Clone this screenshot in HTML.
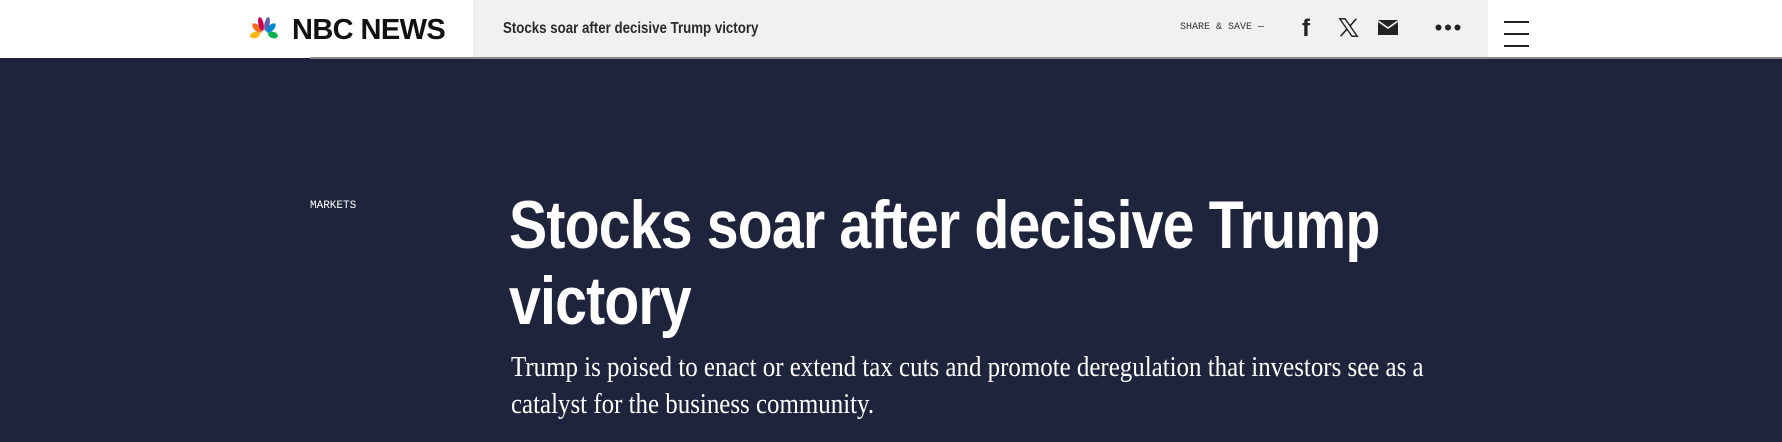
<!DOCTYPE html>
<html><head><style>
*{margin:0;padding:0;box-sizing:border-box}
body{width:1782px;height:442px;overflow:hidden;background:#1e243c;position:relative;font-family:"Liberation Sans",sans-serif}
.hdr{position:absolute;left:0;top:0;width:1782px;height:58px;background:#fff}
.grey{position:absolute;left:473px;top:0;width:1015px;height:58px;background:#f1f1f1}
.line{position:absolute;left:310px;top:57px;width:1472px;height:2px;background:#888}
.abs{position:absolute;white-space:nowrap}
</style></head><body>
<div class="hdr"></div>
<div class="grey"></div>
<div class="line"></div>
<svg class="abs" style="left:250px;top:16px" width="28" height="24" viewBox="0 0 28 24">
<ellipse cx="5" cy="19" rx="5" ry="3.2" fill="#fcb711" transform="rotate(-15 5 19)"/>
<ellipse cx="7" cy="12" rx="3" ry="6" fill="#f37021" transform="rotate(-45 7 12)"/>
<ellipse cx="11" cy="8" rx="2.6" ry="7" fill="#cc004c" transform="rotate(-12 11 8)"/>
<ellipse cx="17" cy="8" rx="2.6" ry="7" fill="#6460aa" transform="rotate(12 17 8)"/>
<ellipse cx="21" cy="12" rx="3" ry="6" fill="#0089d0" transform="rotate(45 21 12)"/>
<ellipse cx="23" cy="19" rx="5" ry="3.2" fill="#0db14b" transform="rotate(15 23 19)"/>
</svg>
<div class="abs" style="left:292px;top:14px;font-size:29px;font-weight:bold;color:#111;letter-spacing:-0.6px">NBC NEWS</div>
<div class="abs" style="left:503px;top:20px;font-size:16px;font-weight:bold;color:#2a2a2a;transform:scaleX(0.83);transform-origin:left">Stocks soar after decisive Trump victory</div>
<div class="abs" style="left:1180px;top:22px;font-family:'Liberation Mono',monospace;font-size:10px;color:#333">SHARE &amp; SAVE —</div>
<div class="abs" style="left:1302px;top:15px;font-size:24px;font-weight:bold;color:#222">f</div>
<svg class="abs" style="left:1338px;top:17px" width="21" height="21" viewBox="0 0 24 24"><path d="M2 2h6l14 20h-6z" fill="none" stroke="#222" stroke-width="1.6"/><path d="M21 2L13.5 10.5M3 22l7.5-8.5" stroke="#222" stroke-width="1.8"/></svg>
<svg class="abs" style="left:1378px;top:20px" width="20" height="15" viewBox="0 0 20 15"><rect width="20" height="15" fill="#222"/><path d="M0 1l10 7 10-7" fill="none" stroke="#f1f1f1" stroke-width="1.6"/></svg>
<svg class="abs" style="left:1435px;top:24px" width="26" height="7"><circle cx="3.5" cy="3.5" r="3" fill="#222"/><circle cx="13" cy="3.5" r="3" fill="#222"/><circle cx="22.5" cy="3.5" r="3" fill="#222"/></svg>
<div class="abs" style="left:1504px;top:21px;width:25px;height:2px;background:#222"></div>
<div class="abs" style="left:1504px;top:33px;width:25px;height:2px;background:#222"></div>
<div class="abs" style="left:1504px;top:45px;width:25px;height:2px;background:#222"></div>
<div class="abs" style="left:310px;top:200px;font-family:'Liberation Mono',monospace;font-size:11px;color:#fff">MARKETS</div>
<div class="abs" style="left:509px;top:187px;font-size:68px;font-weight:bold;color:#fff;line-height:76px;transform:scaleX(0.842);transform-origin:left;letter-spacing:-1px">Stocks soar after decisive Trump<br>victory</div>
<div class="abs" style="left:511px;top:349px;font-family:'Liberation Serif',serif;font-size:28px;color:#fff;line-height:37px;transform:scaleX(0.89);transform-origin:left">Trump is poised to enact or extend tax cuts and promote deregulation that investors see as a<br>catalyst for the business community.</div>
</body></html>
